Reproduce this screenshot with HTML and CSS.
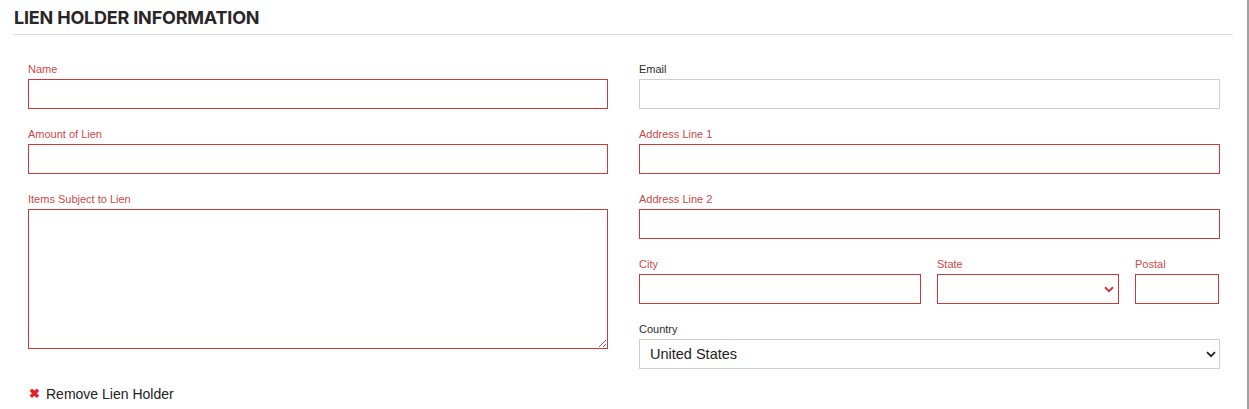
FILE: index.html
```html
<!DOCTYPE html>
<html lang="en">
<head>
<meta charset="utf-8">
<title>Lien Holder Information</title>
<link rel="stylesheet" href="styles.css">
</head>
<body>
<div class="page">
  <h2 class="section-title">LIEN HOLDER INFORMATION</h2>
  <div class="rule"></div>
  <form class="form">
    <div class="grid">
      <div class="col">
        <div class="field">
          <label class="label req">Name</label>
          <input class="input req" type="text">
        </div>
        <div class="field">
          <label class="label req">Amount of Lien</label>
          <input class="input req" type="text">
        </div>
        <div class="field">
          <label class="label req">Items Subject to Lien</label>
          <textarea class="input textarea req"></textarea>
        </div>
      </div>
      <div class="col">
        <div class="field">
          <label class="label">Email</label>
          <input class="input" type="text">
        </div>
        <div class="field">
          <label class="label req">Address Line 1</label>
          <input class="input req" type="text">
        </div>
        <div class="field">
          <label class="label req">Address Line 2</label>
          <input class="input req" type="text">
        </div>
        <div class="row3">
          <div class="field city">
            <label class="label req">City</label>
            <input class="input req" type="text">
          </div>
          <div class="field state">
            <label class="label req">State</label>
            <div class="select-wrap">
              <select class="input select req"><option></option></select>
              <svg class="chev red" width="10" height="7" viewBox="0 0 10 7"><path d="M1 1.2 L5 5.2 L9 1.2" fill="none" stroke="#c93a3a" stroke-width="2"/></svg>
            </div>
          </div>
          <div class="field postal">
            <label class="label req">Postal</label>
            <input class="input req" type="text">
          </div>
        </div>
        <div class="field last">
          <label class="label">Country</label>
          <div class="select-wrap">
            <select class="input select country"><option>United States</option></select>
            <svg class="chev" width="10" height="7" viewBox="0 0 10 7"><path d="M1 1.2 L5 5.2 L9 1.2" fill="none" stroke="#222" stroke-width="1.8"/></svg>
          </div>
        </div>
      </div>
    </div>
    <a class="remove" href="#"><span class="x">&#x2716;</span>Remove Lien Holder</a>
  </form>
</div>
</body>
</html>
```

FILE: styles.css
```css
* { box-sizing: border-box; }
html, body { margin: 0; padding: 0; background: #fff; }
body { font-family: "Liberation Sans", Arial, sans-serif; color: #222; }

.page {
  width: 1249px;
  height: 409px;
  border-right: 2px solid #a0a0a0;
  padding: 8px 0 0 14px;
}

.section-title {
  margin: 0;
  font-family: Inter, "Liberation Sans", sans-serif;
  font-weight: 700;
  font-size: 18px;
  line-height: 20px;
  letter-spacing: -0.2px;
  color: #2a2628;
}

.rule {
  margin-top: 6px;
  width: 1219px;
  height: 1px;
  background: #dcdcdc;
}

.form { padding: 27px 0 0 14px; }

.grid {
  display: grid;
  grid-template-columns: 580px 581px;
  column-gap: 31px;
  align-items: start;
}

.col { display: flex; flex-direction: column; }

.field { display: flex; flex-direction: column; margin-bottom: 18px; }
.field.last { margin-bottom: 0; }
.col:first-child .field:last-child { margin-bottom: 0; }

.label {
  font-size: 11px;
  line-height: 14px;
  margin-bottom: 3px;
  color: #2b2b2b;
}
.label.req { color: #cc4a4a; }

.input {
  display: block;
  width: 100%;
  height: 30px;
  margin: 0;
  border: 1px solid #cfcfcf;
  border-radius: 0;
  background: #fff;
  font-family: "Liberation Sans", Arial, sans-serif;
  font-size: 14px;
  outline: none;
}
.input.req { border-color: #c93a3a; }

.textarea { height: 140px; resize: vertical; }

.row3 { display: flex; gap: 16px; }
.row3 .field { margin-bottom: 18px; }
.city { width: 282px; }
.state { width: 182px; }
.postal { width: 84px; }

.select-wrap { position: relative; }
.select {
  appearance: none;
  -webkit-appearance: none;
  padding: 0 24px 0 10px;
  color: #222;
}
.country { font-size: 14.5px; color: #222; }
.chev { position: absolute; right: 4px; top: 12px; pointer-events: none; }
.chev.red { right: 5px; }

.remove {
  display: inline-flex;
  align-items: center;
  margin-top: 15px;
  margin-left: 1px;
  font-size: 14px;
  line-height: 20px;
  color: #222;
  text-decoration: none;
}
.remove .x {
  color: #e8202a;
  font-size: 12.5px;
  width: 17px;
  font-weight: bold;
}
```
